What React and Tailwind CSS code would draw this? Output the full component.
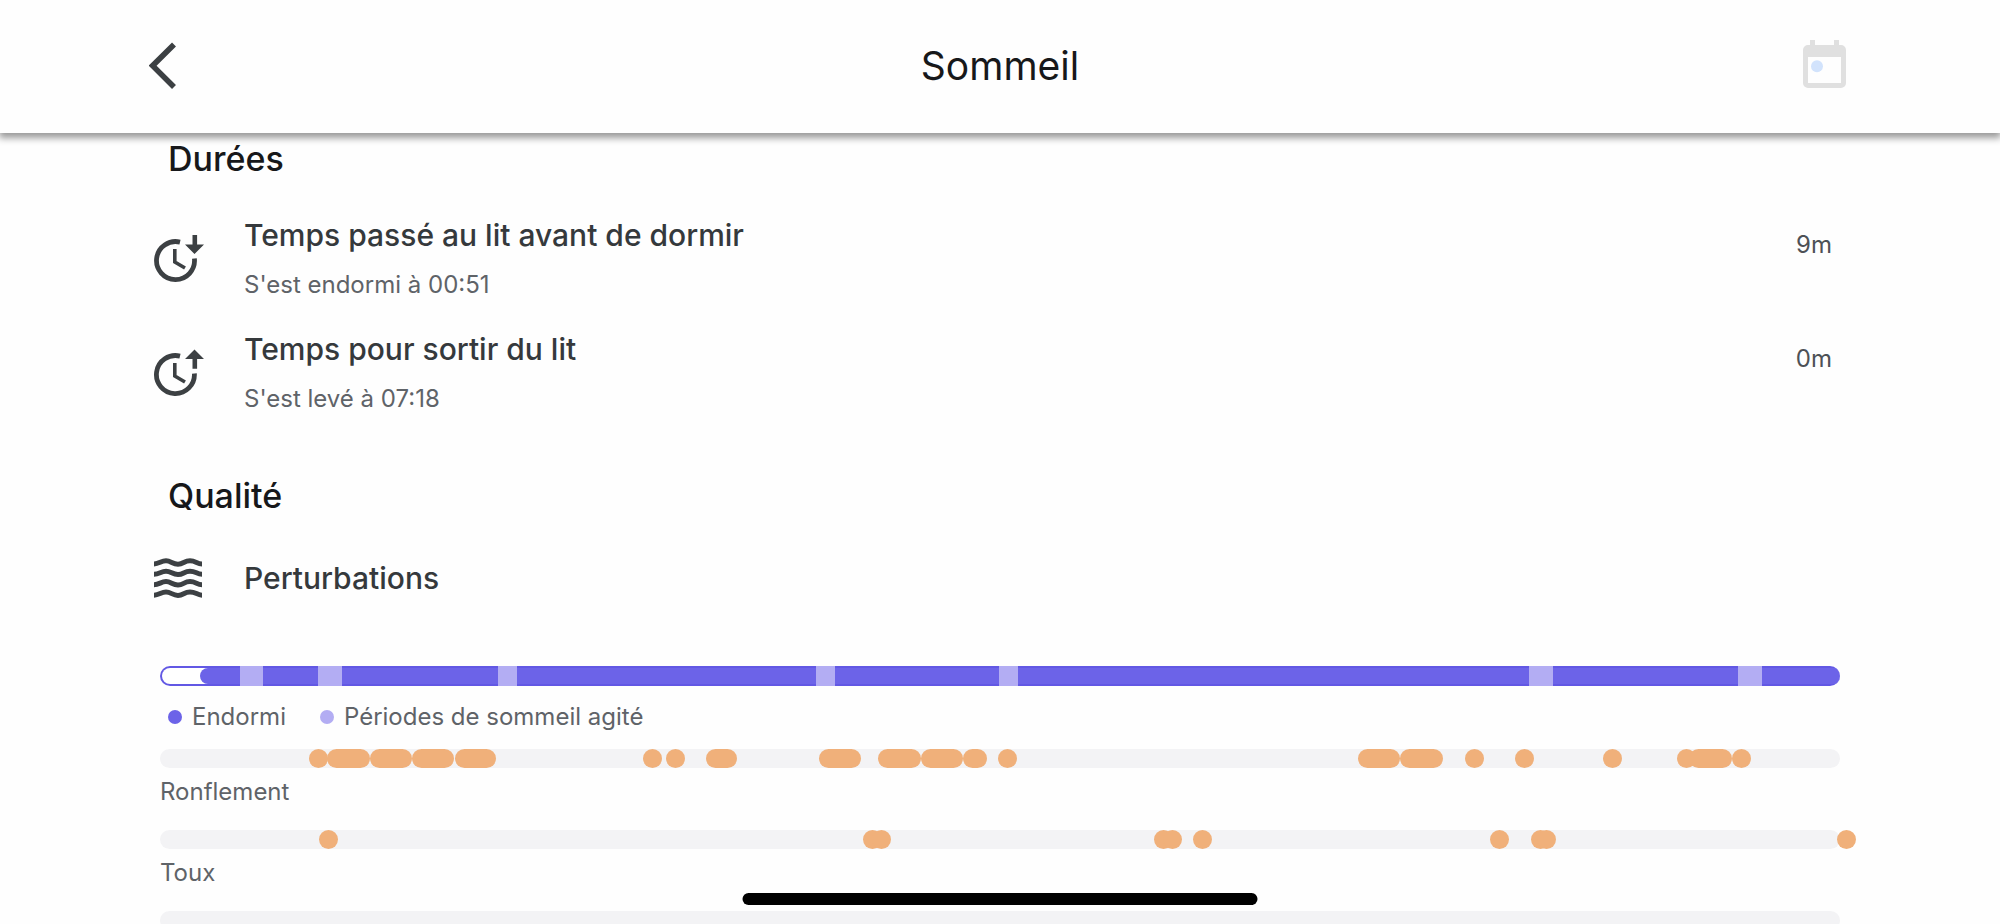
import React from 'react';

// Every track is drawn on the same scale, marks are [start, width]
const TRACK_LENGTH = 1680;

const restless = [
  [80, 23], [158, 24], [338, 19], [656, 19], [839, 19], [1369, 24], [1578, 24],
];

const snoring = [
  [149, 19], [167, 43], [210, 42], [252, 42], [295, 41], [483, 19], [506, 19],
  [546, 31], [659, 42], [718, 43], [761, 42], [803, 24], [838, 19], [1198, 42],
  [1240, 43], [1305, 19], [1355, 19], [1443, 19], [1517, 19], [1529, 43], [1572, 19],
];

const coughing = [
  [159, 19], [703, 19], [712, 19], [994, 19], [1003, 19], [1033, 19],
  [1330, 19], [1371, 19], [1377, 19], [1677, 19],
];

const percent = (value) => `${(value / TRACK_LENGTH) * 100}%`;

function BackIcon() {
  return (
    <svg width="28" height="48" viewBox="0 0 28 48" fill="none" stroke="#3c4043" strokeWidth="5.6" aria-hidden="true">
      <path d="M25 2.5 L3.6 23.7 L25 45" />
    </svg>
  );
}

function CalendarIcon() {
  return (
    <svg width="44" height="48" viewBox="0 0 44 48" aria-hidden="true">
      <path fill="#e0e0e0" d="M7 0h5v5h19V0h5v5h2a5 5 0 0 1 5 5v33a5 5 0 0 1-5 5H5a5 5 0 0 1-5-5V10a5 5 0 0 1 5-5h2z" />
      <path fill="#fefefe" d="M5 17h33v26H5z" />
      <circle cx="14" cy="26.3" r="6" fill="#d2e3fc" />
    </svg>
  );
}

function ClockDownIcon() {
  return (
    <svg width="50" height="48" viewBox="0 0 50 48" fill="none" stroke="#3c4043" aria-hidden="true">
      <path strokeWidth="4.8" d="M26 7.1 A19 19 0 1 0 40.4 23.5" />
      <path strokeWidth="3.6" d="M20.8 14 V27 L31 33" />
      <path fill="#3c4043" stroke="none" d="M38.5 0h4.6v9.5H50L40.5 19 31 9.5h7.5z" />
    </svg>
  );
}

function ClockUpIcon() {
  return (
    <svg width="50" height="48" viewBox="0 0 50 48" fill="none" stroke="#3c4043" aria-hidden="true">
      <path strokeWidth="4.8" d="M26 7.1 A19 19 0 1 0 40.4 24.5" />
      <path strokeWidth="3.6" d="M20.8 14 V27 L31 33" />
      <path fill="#3c4043" stroke="none" d="M40.5 0.5 L50 10h-6.9v9.8h-4.6V10H31z" />
    </svg>
  );
}

function WavesIcon() {
  return (
    <svg width="48" height="40" viewBox="0 0 48 40" fill="none" stroke="#3c4043" strokeWidth="5" aria-hidden="true">
      {[0, 10.4, 20.8, 31.2].map((y) => (
        <path
          key={y}
          transform={`translate(0 ${y})`}
          d="M-1 6 C5 6 7 2.8 12 2.8 S18.5 6.2 24 6.2 S30 2.8 36 2.8 S43 6 49 6"
        />
      ))}
    </svg>
  );
}

function SectionTitle({ children }) {
  return <h2 className="px-2 text-[34px] leading-10 font-medium text-[#17181a]">{children}</h2>;
}

function DurationRow({ icon, title, detail, value }) {
  return (
    <li className="-ml-1.5 flex items-start pr-2">
      <div className="w-[90px] shrink-0 pt-5">{icon}</div>
      <div className="flex-1">
        <h3 className="text-[30px] leading-10 font-medium text-[#35393c]">{title}</h3>
        <p className="mt-3.5 text-2xl leading-8 text-[#5f6368]">{detail}</p>
      </div>
      <span className="pt-3.5 text-2xl leading-8 text-[#4d5156]">{value}</span>
    </li>
  );
}

function Legend({ color, label }) {
  return (
    <li className="flex items-center gap-2.5">
      <span className={`size-3.5 rounded-full ${color}`} />
      {label}
    </li>
  );
}

function SleepBar() {
  return (
    <div className="relative h-5 overflow-hidden rounded-full bg-[#6258e4] py-0.5 pl-0.5">
      <div className="h-full rounded-l-full bg-white">
        <div className="ml-[38px] h-full rounded-l-full bg-[#6c63e8]" />
      </div>
      {restless.map(([start, width]) => (
        <span
          key={start}
          className="absolute inset-y-0 bg-[#b3adf3]"
          style={{ left: percent(start), width: percent(width) }}
        />
      ))}
    </div>
  );
}

function NoiseTrack({ label, marks }) {
  return (
    <div>
      <div className="relative h-[19px] rounded-full bg-[#f3f3f5]">
        {marks.map(([start, width]) => (
          <span
            key={start}
            className="absolute inset-y-0 rounded-full bg-[#f0b07a]"
            style={{ left: percent(start), width: percent(width) }}
          />
        ))}
      </div>
      <p className="mt-2 text-2xl leading-8 text-[#5f6368]">{label}</p>
    </div>
  );
}

export default function App() {
  return (
    <div className="flex h-screen flex-col bg-[#fefefe] font-['Inter',sans-serif]">
      <header className="relative z-10 flex h-[133px] shrink-0 items-center justify-between bg-[#fefefe] px-[149px] pb-0.5 shadow-[0_4px_7px_1px_rgba(0,0,0,0.4)]">
        <button type="button" aria-label="Retour" className="w-12">
          <BackIcon />
        </button>
        <h1 className="text-[39px] leading-12 text-[#17181a]">Sommeil</h1>
        <button type="button" aria-label="Calendrier" className="flex w-12 justify-start pb-1">
          <CalendarIcon />
        </button>
      </header>

      <main className="min-h-0 flex-1 overflow-y-auto px-40 pt-1.5 [scrollbar-width:none]">
        <section>
          <SectionTitle>Durées</SectionTitle>
          <ul className="mt-9 flex flex-col gap-7">
            <DurationRow
              icon={<ClockDownIcon />}
              title="Temps passé au lit avant de dormir"
              detail="S'est endormi à 00:51"
              value="9m"
            />
            <DurationRow
              icon={<ClockUpIcon />}
              title="Temps pour sortir du lit"
              detail="S'est levé à 07:18"
              value="0m"
            />
          </ul>
        </section>

        <section className="mt-[61px]">
          <SectionTitle>Qualité</SectionTitle>
          <div className="mt-[42px] -ml-1.5 flex items-center">
            <div className="w-[90px] shrink-0">
              <WavesIcon />
            </div>
            <h3 className="text-[30px] leading-10 font-medium text-[#35393c]">Perturbations</h3>
          </div>

          <div className="mt-17">
            <SleepBar />
            <ul className="mt-[15px] flex gap-[34px] px-2 text-2xl leading-8 text-[#5f6368]">
              <Legend color="bg-[#6c63e8]" label="Endormi" />
              <Legend color="bg-[#b3adf3]" label="Périodes de sommeil agité" />
            </ul>
          </div>

          <div className="mt-4 flex flex-col gap-[22px]">
            <NoiseTrack label="Ronflement" marks={snoring} />
            <NoiseTrack label="Toux" marks={coughing} />
            <NoiseTrack label="" marks={[]} />
          </div>
        </section>
      </main>

      <div className="fixed bottom-[19px] left-1/2 z-20 h-3 w-[515px] -translate-x-1/2 rounded-full bg-black" />
    </div>
  );
}
